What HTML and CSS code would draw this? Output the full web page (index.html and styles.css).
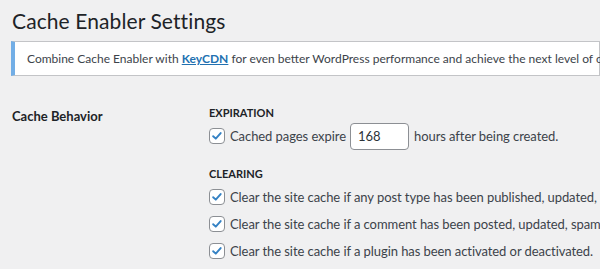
FILE: index.html
```html
<!DOCTYPE html>
<html lang="en">
<head>
    <meta charset="UTF-8">
    <meta name="viewport" content="width=device-width, initial-scale=1.0">
    <title>Cache Enabler Settings</title>
    <link rel="stylesheet" href="styles.css">
</head>
<body>
    <div class="wrap">
        <h1 class="page-title">Cache Enabler Settings</h1>

        <div class="notice">
            <p>Combine Cache Enabler with <a href="#">KeyCDN</a> for even better WordPress performance and achieve the next level of caching with a CDN.</p>
        </div>

        <div class="setting-row">
            <div class="setting-label">Cache Behavior</div>
            <div class="setting-field">
                <div class="field-heading">Expiration</div>
                <label class="option">
                    <span class="checkbox">
                        <svg width="16" height="16" viewBox="0 0 16 16"><path d="M3.6 8.2 L6.6 11 L12.2 4.6" fill="none" stroke="#3582c4" stroke-width="2.2" stroke-linecap="round" stroke-linejoin="round"/></svg>
                    </span>
                    <span>Cached pages expire</span>
                    <input type="text" class="small-input" value="168">
                    <span>hours after being created.</span>
                </label>

                <div class="field-heading clearing">Clearing</div>
                <label class="option compact">
                    <span class="checkbox">
                        <svg width="16" height="16" viewBox="0 0 16 16"><path d="M3.6 8.2 L6.6 11 L12.2 4.6" fill="none" stroke="#3582c4" stroke-width="2.2" stroke-linecap="round" stroke-linejoin="round"/></svg>
                    </span>
                    <span>Clear the site cache if any post type has been published, updated, or trashed (instead of only the page and/or associated cache).</span>
                </label>
                <label class="option compact">
                    <span class="checkbox">
                        <svg width="16" height="16" viewBox="0 0 16 16"><path d="M3.6 8.2 L6.6 11 L12.2 4.6" fill="none" stroke="#3582c4" stroke-width="2.2" stroke-linecap="round" stroke-linejoin="round"/></svg>
                    </span>
                    <span>Clear the site cache if a comment has been posted, updated, spammed, or trashed (instead of only the page cache).</span>
                </label>
                <label class="option compact">
                    <span class="checkbox">
                        <svg width="16" height="16" viewBox="0 0 16 16"><path d="M3.6 8.2 L6.6 11 L12.2 4.6" fill="none" stroke="#3582c4" stroke-width="2.2" stroke-linecap="round" stroke-linejoin="round"/></svg>
                    </span>
                    <span>Clear the site cache if a plugin has been activated or deactivated.</span>
                </label>
            </div>
        </div>
    </div>
</body>
</html>
```

FILE: styles.css
```css
body {
    font-family: Lato, "Noto Sans", sans-serif;
    font-size: 13px;
    color: #3c434a;
    background-color: #f0f0f1;
    margin: 0;
    padding: 0;
    overflow: hidden;
}

.wrap {
    padding-left: 11px;
}

.page-title {
    font-size: 21px;
    font-weight: 400;
    line-height: 30px;
    color: #1d2327;
    margin: 0;
    padding: 6px 0 0 1px;
    height: 30px;
    letter-spacing: 0.1px;
}

.notice {
    margin-top: 5px;
    background-color: #fff;
    border: 1px solid #c3c4c7;
    border-left: 4px solid #72aee6;
    padding: 7px 12px;
    white-space: nowrap;
}

.notice p {
    margin: 0;
    font-size: 12px;
    line-height: 19px;
}

.notice a {
    color: #2271b1;
    font-weight: 700;
}

.setting-row {
    display: flex;
    padding-top: 28px;
}

.setting-label {
    width: 197px;
    flex-shrink: 0;
    padding-top: 2px;
    padding-left: 1px;
    font-size: 13px;
    font-weight: 700;
    line-height: 20px;
    color: #1d2327;
}

.setting-field {
    display: flex;
    flex-direction: column;
    white-space: nowrap;
}

.field-heading {
    font-size: 11px;
    font-weight: 700;
    text-transform: uppercase;
    line-height: 18px;
    color: #1d2327;
}

.field-heading.clearing {
    margin-top: 15px;
}

.option {
    display: flex;
    align-items: center;
    height: 28px;
    letter-spacing: -0.07px;
}

.option.compact {
    height: 27px;
}

.checkbox {
    display: inline-flex;
    align-items: center;
    justify-content: center;
    flex-shrink: 0;
    width: 14px;
    height: 14px;
    border: 1px solid #8c8f94;
    border-radius: 4px;
    background-color: #fff;
    margin-right: 5px;
}

.checkbox svg {
    width: 14px;
    height: 14px;
}

.small-input {
    width: 59px;
    height: 27px;
    flex-shrink: 0;
    box-sizing: border-box;
    margin: 0 5px 0 4px;
    padding: 0 7px;
    border: 1px solid #8c8f94;
    border-radius: 4px;
    font-family: inherit;
    font-size: 13px;
    color: #2c3338;
    background-color: #fff;
}
```
